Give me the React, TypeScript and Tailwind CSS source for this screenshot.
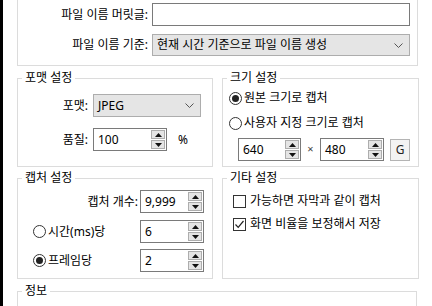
import React from "react";

function Spin({ value, w = "w-[64px]" }: { value: string; w?: string }) {
  return (
    <div className={`${w} h-[23px] border border-[#7a7a7a] bg-white flex items-center shrink-0`}>
      <span className="flex-1 pl-[4px] leading-[16px]">{value}</span>
      <div className="flex flex-col gap-[1px] mr-[1px]">
        <div className="w-[14px] h-[9px] border border-[#adadad] bg-[#e5e5e5] flex items-center justify-center">
          <svg width="7" height="4" viewBox="0 0 7 4"><path d="M0 4 L3.5 0 L7 4 Z" fill="#111" /></svg>
        </div>
        <div className="w-[14px] h-[9px] border border-[#adadad] bg-[#e5e5e5] flex items-center justify-center">
          <svg width="7" height="4" viewBox="0 0 7 4"><path d="M0 0 L3.5 4 L7 0 Z" fill="#111" /></svg>
        </div>
      </div>
    </div>
  );
}

function Radio({ checked, label }: { checked?: boolean; label: string }) {
  return (
    <div className="flex items-center h-[16px]">
      <div className="w-[13px] h-[13px] rounded-full border border-[#333] bg-white flex items-center justify-center">
        {checked && <div className="w-[7px] h-[7px] rounded-full bg-[#222]" />}
      </div>
      <span className="ml-[2px] leading-[16px]">{label}</span>
    </div>
  );
}

function Check({ checked, label }: { checked?: boolean; label: string }) {
  return (
    <div className="flex items-center h-[16px]">
      <div className="w-[13px] h-[13px] border border-[#333] bg-white flex items-center justify-center">
        {checked && (
          <svg width="11" height="11" viewBox="0 0 11 11">
            <path d="M1.5 5.5 L4.2 8.3 L9.5 2" fill="none" stroke="#222" strokeWidth="1.2" />
          </svg>
        )}
      </div>
      <span className="ml-[4px] leading-[16px]">{label}</span>
    </div>
  );
}

function Chevron() {
  return (
    <svg width="9" height="5" viewBox="0 0 9 5">
      <path d="M0.5 0.5 L4.5 4.5 L8.5 0.5" fill="none" stroke="#555" strokeWidth="1" />
    </svg>
  );
}

function Group({ title, className, children }: { title: string; className: string; children?: React.ReactNode }) {
  return (
    <fieldset className={`border border-[#dcdcdc] ${className}`}>
      <legend className="ml-[4px] px-[3px] leading-[16px]">{title}</legend>
      {children}
    </fieldset>
  );
}

export default function App() {
  return (
    <div className="w-[432px] h-[306px] overflow-hidden bg-white flex text-[12px] text-black font-['Noto_Sans','Noto_Sans_CJK_KR',sans-serif]">
      <div className="w-[3px] bg-black shrink-0" />
      <div className="flex flex-col pl-[14px]">
        <div className="w-[401px] border-x border-b border-[#dcdcdc] pt-[3px] pb-[9px] pr-[7px] flex flex-col gap-[8px]">
          <div className="flex items-center justify-end gap-[4px]">
            <span>파일 이름 머릿글:</span>
            <div className="w-[258px] h-[23px] border border-[#7a7a7a] bg-white" />
          </div>
          <div className="flex items-center justify-end gap-[4px]">
            <span>파일 이름 기준:</span>
            <div className="w-[258px] h-[22px] border border-[#adadad] bg-[#e5e5e5] flex items-center justify-between pl-[4px] pr-[6px]">
              <span>현재 시간 기준으로 파일 이름 생성</span>
              <Chevron />
            </div>
          </div>
        </div>

        <div className="flex gap-[9px] mt-[4px]">
          <Group title="포맷 설정" className="w-[196px]">
            <div className="h-[80px] flex flex-col pt-[8px] gap-[11px]">
              <div className="flex items-center">
                <span className="w-[70px] text-right">포맷:</span>
                <div className="ml-[5px] w-[108px] h-[23px] border border-[#adadad] bg-[#e5e5e5] flex items-center justify-between pl-[4px] pr-[6px]">
                  <span>JPEG</span>
                  <Chevron />
                </div>
              </div>
              <div className="flex items-center">
                <span className="w-[70px] text-right">품질:</span>
                <div className="ml-[5px]">
                  <Spin value="100" w="w-[74px]" />
                </div>
                <span className="ml-[11px]">%</span>
              </div>
            </div>
          </Group>
          <Group title="크기 설정" className="w-[197px]">
            <div className="h-[80px] flex flex-col pt-[4px] pl-[6px]">
              <Radio checked label="원본 크기로 캡처" />
              <div className="mt-[9px]">
                <Radio label="사용자 지정 크기로 캡처" />
              </div>
              <div className="mt-[7px] ml-[9px] flex items-center">
                <Spin value="640" w="w-[63px]" />
                <span className="w-[19px] text-center text-[11px] text-[#444]">×</span>
                <Spin value="480" w="w-[64px]" />
                <div className="ml-[6px] w-[20px] h-[22px] border border-[#b4b4b4] bg-[#f3f3f3] flex items-center justify-center text-[#222]">
                  G
                </div>
              </div>
            </div>
          </Group>
        </div>

        <div className="flex gap-[9px] mt-[3px]">
          <Group title="캡처 설정" className="w-[196px]">
            <div className="h-[92px] flex flex-col pt-[4px] pr-[8px]">
              <div className="flex items-center justify-end gap-[2px]">
                <span>캡처 개수:</span>
                <Spin value="9,999" />
              </div>
              <div className="mt-[7px] flex items-center justify-between pl-[15px]">
                <Radio label="시간(ms)당" />
                <Spin value="6" />
              </div>
              <div className="mt-[6px] flex items-center justify-between pl-[15px]">
                <Radio checked label="프레임당" />
                <Spin value="2" />
              </div>
            </div>
          </Group>
          <Group title="기타 설정" className="w-[197px]">
            <div className="h-[92px] flex flex-col pt-[7px] pl-[10px] gap-[7px]">
              <Check label="가능하면 자막과 같이 캡처" />
              <Check checked label="화면 비율을 보정해서 저장" />
            </div>
          </Group>
        </div>

        <Group title="정보" className="w-[400px] mt-[4px]">
          <div className="h-[40px]" />
        </Group>
      </div>
    </div>
  );
}
